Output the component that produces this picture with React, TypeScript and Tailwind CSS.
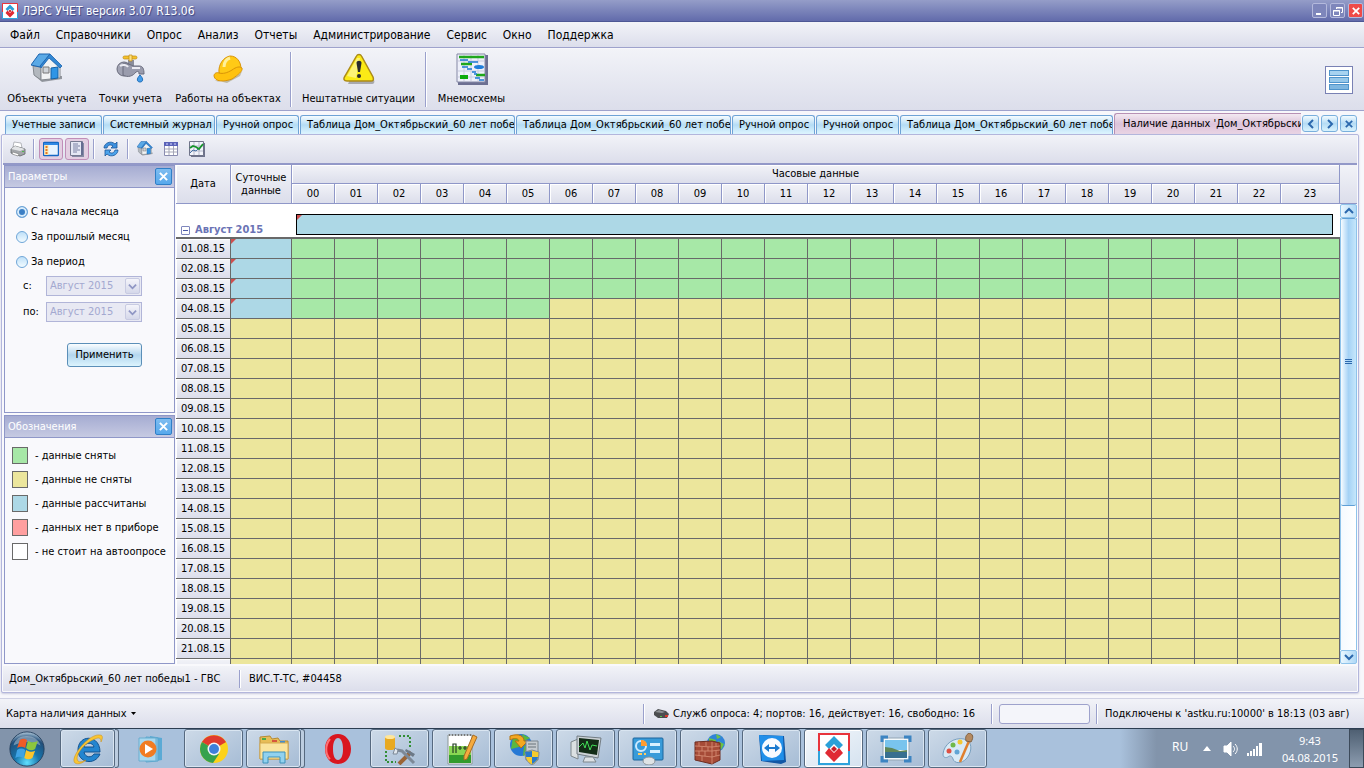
import React from "react";

const HOURS = Array.from({ length: 24 }, (_, i) => String(i).padStart(2, "0"));
const DAYS = Array.from({ length: 21 }, (_, i) => `${String(i + 1).padStart(2, "0")}.08.15`);
const MENU = ["Файл", "Справочники", "Опрос", "Анализ", "Отчеты", "Администрирование", "Сервис", "Окно", "Поддержка"];

const TABS = [
  { label: "Учетные записи", width: "w-[97px]" },
  { label: "Системный журнал", width: "w-[112px]" },
  { label: "Ручной опрос", width: "w-[83px]" },
  { label: "Таблица Дом_Октябрьский_60 лет побе", width: "w-[215px]" },
  { label: "Таблица Дом_Октябрьский_60 лет побе", width: "w-[215px]" },
  { label: "Ручной опрос", width: "w-[83px]" },
  { label: "Ручной опрос", width: "w-[83px]" },
  { label: "Таблица Дом_Октябрьский_60 лет побе", width: "w-[213px]" },
];

const LEGEND = [
  { color: "bg-[#a7e8a7]", label: "- данные сняты" },
  { color: "bg-[#ece69c]", label: "- данные не сняты" },
  { color: "bg-[#add8e6]", label: "- данные рассчитаны" },
  { color: "bg-[#ff9f9f]", label: "- данных нет в приборе" },
  { color: "bg-white", label: "- не стоит на автоопросе" },
];

/* ─── Icons ─── */

function LersLogo({ className }: { className: string }) {
  return (
    <svg viewBox="0 0 32 32" className={className}>
      <path d="M0 0h32v32H0z" fill="#fff" />
      <path d="M1 31V1h30" fill="none" stroke="#e8343c" strokeWidth="2" />
      <path d="M31 1v30H1" fill="none" stroke="#2ea3dc" strokeWidth="2" />
      <path d="M1 18V1h30v17" fill="none" stroke="#e8343c" strokeWidth="2" />
      <path d="M1 18v13h30V18" fill="none" stroke="#2ea3dc" strokeWidth="2" />
      <path d="M16 3l9 9-4 4-5-5-5 5-4-4z" fill="#2ba0d8" />
      <path d="M16 29l-9-9 4-5 5 5 5-5 4 5z" fill="#e02a33" />
      <path d="M16 13l3 3-3 3-3-3z" fill="#c8202a" />
    </svg>
  );
}

function HouseIcon({ className }: { className: string }) {
  return (
    <svg viewBox="0 0 32 32" className={className}>
      <path d="M4 23l7 6 20-3v-3z" fill="#5c6167" opacity=".6" />
      <path d="M2 13l8 1v13l-7-5z" fill="#b3b8be" stroke="#858a90" />
      <path d="M10 14l8-10 11 10v11l-19 2z" fill="#f1f3f4" stroke="#858a90" />
      <path d="M0 12L8 1h11L9 14z" fill="#5aa9e6" stroke="#1b62ad" />
      <path d="M19 1l12 12-2 2L18 5l-8 10-1-2z" fill="#3287d3" stroke="#1b62ad" strokeWidth=".8" />
      <path d="M20 15l7-1v11l-7 1z" fill="#2f95e6" stroke="#1661a4" />
      <path d="M12 14h6v6h-6z" fill="#cfd4d9" stroke="#777" />
    </svg>
  );
}

function TapIcon() {
  return (
    <svg viewBox="0 0 32 32" className="size-8">
      <path d="M13 7h6v7h-6z" fill="#8a8d9c" />
      <circle cx="9" cy="16" r="7" fill="#a1a3b3" stroke="#696b7c" />
      <path d="M8 11c5-1 8 1 10 2h6c4 0 5 3 5 8h-5c0-3-1-3-3-2-3 4-8 6-13 3z" fill="#9a9cad" stroke="#696b7c" />
      <path d="M5 13c3-2 7-1 8 1M17 15h8" fill="none" stroke="#ececf3" strokeWidth="2" />
      <rect x="8" y="3" width="14" height="3" rx="1.500" fill="#f4c22c" stroke="#bf8a14" strokeWidth=".7" />
      <path d="M14 2h3v6h-3z" fill="#ffe280" stroke="#bf8a14" strokeWidth=".7" />
      <path d="M25 22c4 4 3 7 0 7s-4-3 0-7z" fill="#439deb" stroke="#2470b9" />
    </svg>
  );
}

function HelmetIcon() {
  return (
    <svg viewBox="0 0 32 32" className="size-8">
      <path d="M3 27c4 5 26-3 28-11l-3 7-13 7z" fill="#827331" opacity=".4" />
      <path d="M7 20C6 11 12 4 18 3c7 0 11 6 11 13L16 23z" fill="#ffca16" stroke="#d99408" />
      <path d="M2 23c0-3 3-4 5-3 4 1 8 0 13-3 4-3 8-4 10-2 1 3-4 7-10 11-8 3-17 3-18-3z" fill="#ffc20e" stroke="#d99408" />
      <path d="M12 14c0-5 3-8 6-9" fill="none" stroke="#fff09b" strokeWidth="3" />
    </svg>
  );
}

function WarningIcon() {
  return (
    <svg viewBox="0 0 32 32" className="size-8">
      <path d="M17 3l14 24c1 2 0 4-2 4H5z" fill="#6c6c6c" opacity=".5" />
      <path d="M13.500 3c1-2 4-2 5 0L30 24c1 3 0 4-2 4H4c-3 0-4-2-2-5z" fill="#fbea16" stroke="#ad8b17" strokeWidth="1.500" />
      <path d="M14 5L4 23l9 2 4-20z" fill="#fdf5a1" opacity=".7" />
      <path d="M13.500 10c0-3 5-3 5 0l-1.500 9h-2z" fill="#29292e" />
      <circle cx="16" cy="23" r="2" fill="#29292e" />
    </svg>
  );
}

function SchemeIcon() {
  return (
    <svg viewBox="0 0 32 32" className="size-8">
      <path d="M2 2h30v30H2z" fill="#6d7092" />
      <path d="M1 1h28v28H1z" fill="#eef0fa" stroke="#8588a5" />
      <path d="M8 2v26M15 2v26M22 2v26M2 8h26M2 18h26M2 24h26" stroke="#c9cce0" />
      <path d="M3 4h25M5 11h11M20 22h9" stroke="#1fa71c" strokeWidth="2.500" />
      <path d="M4 22h8v4H4z" fill="#0daa0d" />
      <path d="M4 7h8M12 9h10M6 14h6M11 16h5M16 19h4M18 21h3M19 25h5M23 27h5" fill="none" stroke="#1c78d2" strokeWidth="1.500" />
      <ellipse cx="23" cy="14" rx="5" ry="2" fill="#1e7dda" />
    </svg>
  );
}

function PrinterIcon() {
  return (
    <svg viewBox="0 0 16 16" className="size-4">
      <path d="M3 6l1-5 7 1 1 5z" fill="#fff" stroke="#9a9ca2" strokeWidth=".7" />
      <path d="M1 8l4-3 10 3v5l-5 2-9-3z" fill="#a2a5a9" stroke="#5e6265" strokeWidth=".8" />
      <path d="M1 8l4-3 10 3-5 2z" fill="#e3e5e7" />
      <path d="M3 11l6 2-1 2-6-2z" fill="#fff" stroke="#777" strokeWidth=".6" />
      <path d="M12 10h2v1h-2z" fill="#51b84e" />
    </svg>
  );
}

function PanelIcon() {
  return (
    <svg viewBox="0 0 16 16" className="size-4">
      <rect x=".5" y="1.500" width="15" height="13" rx="1" fill="#e8f3ff" stroke="#1567c4" strokeWidth="1.500" />
      <path d="M1 2h14v2H1z" fill="#3188e5" />
      <path d="M1.500 4h4v10h-4z" fill="#ffe8a6" />
      <path d="M2.500 5h2v2h-2zM2.500 8h2v2h-2zM2.500 11h2v2h-2z" fill="#e7772a" />
    </svg>
  );
}

function DocumentIcon() {
  return (
    <svg viewBox="0 0 16 16" className="size-4">
      <path d="M3 2h12v14H3z" fill="#858aa5" />
      <path d="M1.500.500h12v14h-12z" fill="#e4e7f4" stroke="#767a91" />
      <path d="M4 3h5M4 5h7M4 7h5M4 9h7M4 11h4" stroke="#7b81a4" />
      <path d="M12 1h2v13h-2z" fill="#666d91" />
    </svg>
  );
}

function RefreshIcon() {
  return (
    <svg viewBox="0 0 16 16" className="size-4">
      <path d="M1 7c0-5 7-8 11-4l2-2v6H8l2-2C7 3 5 4 4 7z" fill="#3d91df" stroke="#1b5799" strokeWidth=".8" />
      <path d="M15 9c0 5-7 8-11 4l-2 2V9h6l-2 2c3 2 5 1 6-2z" fill="#4ca4ec" stroke="#1b5799" strokeWidth=".8" />
    </svg>
  );
}

function TableIcon() {
  return (
    <svg viewBox="0 0 16 16" className="size-4">
      <path d="M1.500 1.500h13v13h-13z" fill="#fff" stroke="#8a8cb0" />
      <path d="M1 1h14v4H1z" fill="#5a62b8" />
      <path d="M3 3h2M7 3h2M11 3h2" stroke="#d6daff" />
      <path d="M6 5v9M10.500 5v9M2 8h12M2 11h12" stroke="#a5a6b7" />
    </svg>
  );
}

function ChartIcon() {
  return (
    <svg viewBox="0 0 16 16" className="size-4">
      <path d="M2 2h14v14H2z" fill="#6e738c" />
      <path d="M.500.500h14v14H.500z" fill="#f2f4fb" stroke="#70748a" />
      <path d="M5 1v13M10 1v13M1 5h13M1 10h13" stroke="#b6bacd" />
      <path d="M1 7l3-2 3 1 3 2 4-5" fill="none" stroke="#15942a" strokeWidth="1.800" />
      <path d="M1 12l3-3 3 1 2-2" fill="none" stroke="#4772a4" />
    </svg>
  );
}

function CloseGlyph({ className }: { className: string }) {
  return (
    <svg viewBox="0 0 10 10" className={className} fill="none" stroke="currentColor" strokeWidth="2.200">
      <path d="M1 1l8 8M9 1L1 9" />
    </svg>
  );
}

function Chevron({ d }: { d: string }) {
  return (
    <svg viewBox="0 0 10 10" className="size-[10px]" fill="none" stroke="#2b68ad" strokeWidth="2">
      <path d={d} />
    </svg>
  );
}

/* ─── Taskbar icons, 32px ─── */

const StartOrb = () => (
  <svg viewBox="0 0 40 40" className="size-9">
    <defs>
      <radialGradient id="orb" cx=".5" cy=".9" r=".9">
        <stop offset="0" stopColor="#5fe0ff" />
        <stop offset=".4" stopColor="#1775ac" />
        <stop offset=".8" stopColor="#224f7a" />
        <stop offset="1" stopColor="#b8cfe0" />
      </radialGradient>
    </defs>
    <circle cx="20" cy="20" r="19" fill="url(#orb)" stroke="#223d5b" />
    <path d="M5 16C8 2 31 2 35 16c-9-5-20-5-30 0z" fill="#fff" opacity=".35" />
    <path d="M12 10c3-2 5-2 8 0l-2 9c-3-2-6-2-9 0z" fill="#ee5b27" />
    <path d="M21 11c4 2 7 2 11 0l-3 9c-3 2-7 2-10-1z" fill="#8cc63e" />
    <path d="M9 21c3-2 6-2 9 0l-2 9c-3-2-6-2-9 0z" fill="#3fa3e5" />
    <path d="M19 21c3 2 6 3 10 1l-3 8c-3 2-6 2-9 0z" fill="#fcc52c" />
  </svg>
);

const ExplorerE = () => (
  <svg viewBox="0 0 32 32" className="size-8">
    <path d="M28 19H12c1 6 8 6 10 2h6c-5 12-22 9-22-4C6 1 28 1 28 19zM12 14h10c-1-5-9-5-10 0z" fill="#2385cf" stroke="#125390" />
    <path d="M3 30C-3 25 17 0 28 2c4 0 2 5 1 7 0-4-2-5-6-3C12 10 2 23 6 28c2 2 6 0 8-1-3 3-8 5-11 3z" fill="#f9c534" stroke="#c98d14" strokeWidth=".5" />
  </svg>
);

const MediaIcon = () => (
  <svg viewBox="0 0 32 32" className="size-8">
    <path d="M14 3l12 2v22l-12 2z" fill="#5aaad5" />
    <path d="M10 4l12 1v23l-12 1z" fill="#8cc7e6" stroke="#5ba5cc" />
    <path d="M3 5h17v23H3z" fill="#a8d8ef" stroke="#68adcf" />
    <circle cx="12" cy="16" r="8.500" fill="#f17c22" />
    <path d="M9 11l8 5-8 5z" fill="#fff" />
  </svg>
);

const ChromeIcon = () => (
  <svg viewBox="0 0 32 32" className="size-8">
    <circle cx="16" cy="16" r="14" fill="#fcd21b" />
    <path d="M16 16L3.900 9A14 14 0 0 1 28 9H16z" fill="#e03a2e" />
    <path d="M16 16L3.900 9A14 14 0 0 0 15 30l6-9z" fill="#36a24d" />
    <path d="M16 9h12.100L16 16z" fill="#e03a2e" />
    <circle cx="16" cy="16" r="6.500" fill="#f4f5f6" />
    <circle cx="16" cy="16" r="5" fill="#3f7fdb" />
  </svg>
);

const FolderIcon = () => (
  <svg viewBox="0 0 32 32" className="size-8">
    <path d="M2 7V4l10-1 2 3 6-1 2 3h8v18H2z" fill="#e7bd57" stroke="#b78a31" />
    <path d="M4 5h4v2H4z" fill="#4bab48" />
    <path d="M14 7h5v2h-5z" fill="#d8573c" />
    <path d="M22 8h5v3h-5z" fill="#418dcc" />
    <path d="M2 10h28v16H2z" fill="#fae49d" stroke="#d5aa50" />
    <path d="M5 30V19h22v11h-5v-6H10v6z" fill="#91d2ef" stroke="#3c91ba" />
  </svg>
);

const OperaIcon = () => (
  <svg viewBox="0 0 32 32" className="size-8">
    <path d="M16 1C9 1 3 7 3 16s6 15 13 15 13-6 13-15S23 1 16 1zm0 4c3 0 5 4 5 11s-2 11-5 11-5-4-5-11 2-11 5-11z" fill="#d9161f" />
    <path d="M8 6c-5 6-5 15 0 20" fill="none" stroke="#ff7172" strokeWidth="2" />
  </svg>
);

const ToolsIcon = () => (
  <svg viewBox="0 0 32 32" className="size-8">
    <path d="M15 3h11v11M2 18v11h10" fill="none" stroke="#328e35" strokeWidth="2" strokeDasharray="2 2" />
    <path d="M1 4h10v11H1z" fill="#e8a921" />
    <ellipse cx="6" cy="4" rx="5" ry="2" fill="#ffe699" />
    <ellipse cx="6" cy="15" rx="5" ry="2" fill="#e8a921" />
    <path d="M27 19L15 31" stroke="#9b6436" strokeWidth="4" />
    <path d="M13 17l5 1 12 12" fill="none" stroke="#7d8997" strokeWidth="3" />
    <path d="M22 16l9 5-2 3-8-6z" fill="#6c7987" />
    <path d="M11 15l3 2-1 4h-4z" fill="#e2e8ee" stroke="#7d8997" />
  </svg>
);

const NotepadIcon = () => (
  <svg viewBox="0 0 32 32" className="size-8">
    <path d="M2 2h24v29H2z" fill="#fff" stroke="#8c9697" />
    <path d="M3 13h22v17H3z" fill="#8ad653" />
    <path d="M3 22h22v8H3z" fill="#329b2d" />
    <path d="M3 2h22" stroke="#777" strokeWidth="2" strokeDasharray="1 2" />
    <path d="M7 20v-9h3v9M12 15h4M14 13v4M17 15h4M19 13v4" fill="none" stroke="#263f27" strokeWidth="1.200" />
    <path d="M27 2l4 2-10 22-3 1v-4z" fill="#f5aa3d" stroke="#a56b24" />
  </svg>
);

const GlobeServerIcon = () => (
  <svg viewBox="0 0 32 32" className="size-8">
    <circle cx="13" cy="12" r="11" fill="#2779d5" />
    <path d="M5 4l9 3-3 7-8 2zM16 13l7-3-1 9-7 4zM14 1l8 4-6 3z" fill="#5bb840" />
    <path d="M2 3c9-3 14 0 14 5h4l-7 7-6-7h4C10 5 6 5 2 7z" fill="#f3a821" stroke="#b6720d" />
    <path d="M18 8h12v19H18z" fill="#c5cbd0" stroke="#7a858d" />
    <path d="M20 11h8M20 14h8" stroke="#68737b" />
    <path d="M24 17l7 2c0 7-2 10-7 13-5-3-7-6-7-13z" fill="#f6cb2e" stroke="#7d899b" />
    <path d="M24 18v6h-6l-1-5zM24 24h6c-1 4-3 5-6 7z" fill="#2979cc" />
  </svg>
);

const MonitorIcon = () => (
  <svg viewBox="0 0 32 32" className="size-8">
    <path d="M1 9l7-3v20l-7-3z" fill="#dbe0e2" stroke="#7e878c" />
    <path d="M7 3l24 2-3 20-21-4z" fill="#ccd2d6" stroke="#737d84" />
    <path d="M9 5l20 2-2 15-18-3z" fill="#132c17" />
    <path d="M9 14l4-4 2 5 2-7 3 9 2-5 5 1" fill="none" stroke="#40dc55" />
    <path d="M15 24h8l3 5H13z" fill="#dce1e5" stroke="#7e878c" />
  </svg>
);

const ControlPanelIcon = () => (
  <svg viewBox="0 0 32 32" className="size-8">
    <rect x="1" y="5" width="30" height="22" rx="1" fill="#389bd9" stroke="#1c659c" />
    <circle cx="9" cy="13" r="5" fill="none" stroke="#cceaff" strokeWidth="2" />
    <path d="M9 13V7c4 0 6 2 6 6z" fill="#ff9c30" />
    <path d="M18 10h10v3H18zM18 17h10v3H18z" fill="#d6f0ff" />
    <path d="M6 21h4M12 21h2" stroke="#ffcc63" strokeWidth="2" />
    <ellipse cx="17" cy="28" rx="6" ry="4" fill="#dfe3e5" stroke="#8a9297" />
  </svg>
);

const FirewallIcon = () => (
  <svg viewBox="0 0 32 32" className="size-8">
    <circle cx="22" cy="10" r="9" fill="#3084d8" />
    <path d="M15 5l7 2-2 6-5 1zM24 8l6 3-3 6zM22 1l5 3-4 2z" fill="#6cc344" />
    <path d="M1 9l17-1 8 2v17l-8 4-17-4z" fill="#a64b37" stroke="#6c2c20" />
    <path d="M1 13l17 1 8-1M1 18h17l8-1M1 22l17 2 8-2M18 9v22M5 9v4M12 9v4M8 14v4M14 14v4M5 18v5M11 18v5M8 23v5M22 10v3M22 18v5" fill="none" stroke="#d99278" strokeWidth=".8" />
  </svg>
);

const TeamViewerIcon = () => (
  <svg viewBox="0 0 32 32" className="size-8">
    <path d="M3 2l25 1 2 26-5 2-20-3z" fill="#1257a5" />
    <path d="M3 2l24 1 1 24-22 1z" fill="#218fe9" />
    <circle cx="16" cy="15" r="10" fill="#f7faff" />
    <path d="M8 15l5-4v3h6v-3l5 4-5 4v-3h-6v3z" fill="#1878cf" />
  </svg>
);

const PictureIcon = () => (
  <svg viewBox="0 0 32 32" className="size-8">
    <path d="M3 5h26v22H3z" fill="#f3f9fc" stroke="#93a5b4" />
    <path d="M5 7h22v10H5z" fill="#79c4ed" />
    <path d="M5 14l7 1 8 3 7-1v3H5z" fill="#5f8658" />
    <path d="M5 19h22v6H5z" fill="#376f90" />
    <path d="M2 9V4h6M24 4h6v5M30 23v5h-6M8 28H2v-5" fill="none" stroke="#3c84c2" strokeWidth="3" />
  </svg>
);

const PaletteIcon = () => (
  <svg viewBox="0 0 32 32" className="size-8">
    <path d="M1 21C2 11 12 4 22 6c8 2 9 11 3 19-6 7-13 5-14 1-1-3-3-4-5-2-2 1-5 1-5-3z" fill="#d9eaf6" stroke="#79a0bf" />
    <circle cx="7" cy="18" r="2.500" fill="#df5144" />
    <circle cx="11" cy="12" r="2.500" fill="#70b948" />
    <circle cx="18" cy="9" r="2.500" fill="#f4c832" />
    <circle cx="15" cy="19" r="2.500" fill="#61a5d5" />
    <path d="M18 29l9-21" stroke="#df7f2d" strokeWidth="2.500" />
    <path d="M24 8c-1-4 0-6 3-8 4 1 5 4 2 9z" fill="#b58a60" stroke="#7f6042" />
  </svg>
);

const TASKS = [
  { name: "Internet Explorer", icon: <ExplorerE />, kind: "stack" },
  { name: "Windows Media Player", icon: <MediaIcon />, kind: "pinned" },
  { name: "Chrome", icon: <ChromeIcon />, kind: "open" },
  { name: "Проводник", icon: <FolderIcon />, kind: "stack" },
  { name: "Opera", icon: <OperaIcon />, kind: "pinned" },
  { name: "Администрирование", icon: <ToolsIcon />, kind: "open" },
  { name: "Notepad++", icon: <NotepadIcon />, kind: "open" },
  { name: "Сеть", icon: <GlobeServerIcon />, kind: "open" },
  { name: "Монитор", icon: <MonitorIcon />, kind: "open" },
  { name: "Панель управления", icon: <ControlPanelIcon />, kind: "open" },
  { name: "Брандмауэр", icon: <FirewallIcon />, kind: "open" },
  { name: "TeamViewer", icon: <TeamViewerIcon />, kind: "open" },
  { name: "ЛЭРС УЧЕТ", icon: <LersLogo className="size-8" />, kind: "active" },
  { name: "Просмотр", icon: <PictureIcon />, kind: "open" },
  { name: "Paint", icon: <PaletteIcon />, kind: "open" },
];

const TASK_STYLE: Record<string, string> = {
  pinned: "border-transparent",
  open: "border-[#56697f] bg-linear-to-br from-[#cddae8] to-[#a6bcd5] shadow-[inset_0_0_0_1px_#d9e5f1]",
  stack: "border-[#56697f] bg-linear-to-br from-[#cddae8] to-[#a6bcd5] shadow-[inset_0_0_0_1px_#d9e5f1]",
  active: "border-[#56697f] bg-linear-to-br from-[#f4f8fc] to-[#d5e2ef] shadow-[inset_0_0_0_1px_#ffffff]",
};

/* ─── Pieces ─── */

function Separator({ className }: { className: string }) {
  return <div className={`w-[2px] shrink-0 border-l border-[#9aa0cc] bg-white ${className}`} />;
}

interface ToolButtonProps {
  label: string;
  width: string;
  children: React.ReactNode;
}

function ToolButton({ label, width, children }: ToolButtonProps) {
  return (
    <button className={`flex shrink-0 flex-col items-center gap-[7px] whitespace-nowrap pt-1 ${width}`}>
      {children}
      <span className="leading-[14px]">{label}</span>
    </button>
  );
}

function SidePanel({ title, className, children }: { title: string; className: string; children: React.ReactNode }) {
  return (
    <section className={`flex flex-col border border-[#8f97c8] bg-[#f9f9fc] ${className}`}>
      <header className="flex h-[22px] shrink-0 items-center justify-between border-b border-[#8f97c8] bg-linear-to-b from-[#a6acd2] to-[#c6cae2] pl-[3px] pr-[2px] text-white">
        <h2>{title}</h2>
        <button aria-label="Закрыть" className="flex size-[17px] items-center justify-center rounded-[2px] border border-[#2f7fc7] bg-linear-to-b from-[#7dbcf0] to-[#57a9ec]">
          <CloseGlyph className="size-[9px]" />
        </button>
      </header>
      {children}
    </section>
  );
}

function PeriodRadio({ label, checked }: { label: string; checked?: boolean }) {
  return (
    <label className="flex h-[25px] items-center gap-[3px]">
      <input
        type="radio"
        name="period"
        defaultChecked={checked}
        className="size-3 appearance-none rounded-full border border-[#6fa6d8] bg-linear-to-b from-[#bfe0f8] to-[#f2fbff] checked:bg-[#3c7fc4] checked:bg-none checked:shadow-[inset_0_0_0_2px_#d8ecfb]"
      />
      {label}
    </label>
  );
}

function MonthSelect({ id, label }: { id: string; label: string }) {
  return (
    <div className="flex items-center">
      <label htmlFor={id} className="w-[23px]">{label}</label>
      <div className="flex h-5 w-24 items-center border border-[#b1b5d8] bg-[#e8e9f3] pl-[3px] pr-[1px]">
        <select id={id} disabled className="min-w-0 flex-1 appearance-none text-[#a3a8d0] opacity-100">
          <option>Август 2015</option>
        </select>
        <span className="flex h-4 w-[15px] items-center justify-center rounded-[2px] border border-[#c8cbe2] bg-linear-to-b from-[#f4f4fa] to-[#d5d8ea]">
          <svg viewBox="0 0 10 10" className="size-[9px]" fill="none" stroke="#8f96c4" strokeWidth="2">
            <path d="M1 3l4 4 4-4" />
          </svg>
        </span>
      </div>
    </div>
  );
}

function NavButton({ label, children }: { label: string; children: React.ReactNode }) {
  return (
    <button aria-label={label} className="flex size-[17px] items-center justify-center rounded-[3px] border border-[#7ab0dd] bg-linear-to-b from-[#f2fbff] via-[#b5dcf5] to-[#d8f2fd] text-[#2b68ad]">
      {children}
    </button>
  );
}

const HEAD = "border-b border-r border-[#8f97c8] bg-linear-to-b from-[#f2f3f8] to-[#dcdeeb] p-0 font-normal shadow-[inset_1px_1px_0_#ffffff]";
const CELL = "border-b border-r border-[#696969] p-0";

function cellColor(day: number, hour: number) {
  return day < 3 || (day === 3 && hour < 6) ? "bg-[#a7e8a7]" : "bg-[#ece69c]";
}

function CornerMark() {
  return (
    <svg viewBox="0 0 5 5" className="block size-[5px]">
      <path d="M0 0h5L0 5z" fill="#cf4f4f" />
    </svg>
  );
}

function DayRow({ date, day }: { date: string; day: number }) {
  return (
    <tr className="h-5">
      <th className={`${CELL} bg-linear-to-b from-[#f2f3f8] to-[#dcdeeb] font-normal shadow-[inset_1px_1px_0_#ffffff]`}>{date}</th>
      <td className={`${CELL} align-top ${day < 4 ? "bg-[#add8e6]" : "bg-[#ece69c]"}`}>
        {day < 4 && <CornerMark />}
      </td>
      {HOURS.map((h, hour) => (
        <td key={h} className={`${CELL} ${cellColor(day, hour)}`} />
      ))}
    </tr>
  );
}

function DataTable() {
  return (
    <div className="h-full min-w-0 flex-1 overflow-hidden bg-white">
      <table className="w-full table-fixed border-separate border-spacing-0">
        <colgroup>
          <col className="w-[55px]" />
          <col className="w-[61px]" />
          {HOURS.map((h) => (
            <col key={h} className={h === "23" ? "" : "w-[43px]"} />
          ))}
        </colgroup>
        <thead>
          <tr className="h-[19px]">
            <th rowSpan={2} className={HEAD}>Дата</th>
            <th rowSpan={2} className={`${HEAD} leading-[13px]`}>Суточные данные</th>
            <th colSpan={24} className={`${HEAD} leading-[14px]`}>Часовые данные</th>
          </tr>
          <tr className="h-5">
            {HOURS.map((h) => (
              <th key={h} className={HEAD}>{h}</th>
            ))}
          </tr>
        </thead>
        <tbody>
          <tr className="h-[35px]">
            <td colSpan={26} className="border-b-2 border-[#696969] p-0">
              <div className="flex h-[33px] items-end">
                <div className="flex w-[120px] items-center gap-[5px] pl-[5px] font-bold text-[#6b74b5]">
                  <button aria-label="Свернуть" className="flex size-[9px] items-center justify-center rounded-[1px] border border-[#7f87bd] bg-white">
                    <span className="h-px w-[5px] bg-[#4c5aa5]" />
                  </button>
                  Август 2015
                </div>
                <div className="mb-[2px] mr-[7px] h-[21px] flex-1 border border-black bg-[#add8e6]">
                  <CornerMark />
                </div>
              </div>
            </td>
          </tr>
          {DAYS.map((date, day) => (
            <DayRow key={date} date={date} day={day} />
          ))}
          <DayRow date="" day={DAYS.length} />
        </tbody>
      </table>
    </div>
  );
}

function ScrollColumn() {
  return (
    <div className="flex w-[17px] shrink-0 flex-col">
      <div className="h-[39px] shrink-0 border-b border-[#8f97c8] bg-linear-to-b from-[#f2f3f8] to-[#dcdeeb]" />
      <button aria-label="Вверх" className="flex h-[14px] shrink-0 items-center justify-center rounded-[2px] border border-[#8fc3ea] bg-linear-to-r from-[#eaf7ff] to-[#aed8f6]">
        <Chevron d="M1 7l4-4 4 4" />
      </button>
      <div className="min-h-0 flex-1 border-x border-[#8fc3ea] bg-linear-to-r from-[#f5fafe] to-white">
        <div className="flex h-2/3 items-center justify-center rounded-[2px] border-y border-[#5f9fd6] bg-linear-to-r from-[#f7fcff] via-[#a5d2f5] to-[#c6e7fb]">
          <span className="flex h-[5px] w-[7px] items-center border-y border-[#2b68ad]">
            <span className="h-px w-full bg-[#2b68ad]" />
          </span>
        </div>
      </div>
      <button aria-label="Вниз" className="flex h-[14px] shrink-0 items-center justify-center rounded-[2px] border border-[#8fc3ea] bg-linear-to-r from-[#eaf7ff] to-[#aed8f6]">
        <Chevron d="M1 3l4 4 4-4" />
      </button>
    </div>
  );
}

function TitleBar() {
  const box = "flex size-[15px] items-center justify-center rounded-[2px] border border-[#b4b9dc]";
  return (
    <header className="flex h-[22px] shrink-0 items-center gap-1 border-b border-[#4d5794] bg-linear-to-b from-[#959dc8] to-[#626bab] pl-[2px] pr-[1px] text-white">
      <LersLogo className="size-4" />
      <h1 className="flex-1 text-[12px] [text-shadow:1px_1px_1px_#3b4480]">ЛЭРС УЧЕТ версия 3.07 R13.06</h1>
      <div className="flex gap-[3px]">
        <button aria-label="Свернуть" className={`${box} bg-[#7e86bb]`}>
          <svg viewBox="0 0 10 10" className="size-[10px]"><path d="M1 7h5v2H1z" fill="#fff" /></svg>
        </button>
        <button aria-label="Восстановить" className={`${box} bg-[#7e86bb]`}>
          <svg viewBox="0 0 10 10" className="size-[10px]" fill="none" stroke="#fff">
            <path d="M.500 4.500h6v5h-6zM0 5h7M3.500 3V1.500h6v5H8M3 2h7" />
          </svg>
        </button>
        <button aria-label="Закрыть" className={`${box} bg-[#ef4a48]`}>
          <CloseGlyph className="size-[8px]" />
        </button>
      </div>
    </header>
  );
}

function Taskbar() {
  return (
    <footer className="flex h-10 shrink-0 items-stretch border-t border-[#2c3d52] bg-[#a9c1dc]">
      <button aria-label="Пуск" className="flex w-[60px] items-center bg-[#8294ab] pl-[9px]">
        <StartOrb />
      </button>
      <div className="flex gap-[3px]">
        {TASKS.map((task) => (
          <div key={task.name} className="flex w-[59px]">
            <button aria-label={task.name} className={`flex min-w-0 flex-1 items-center justify-center rounded-[3px] border ${TASK_STYLE[task.kind]}`}>
              {task.icon}
            </button>
            {task.kind === "stack" && <span className="w-1 rounded-r-[3px] border-y border-r border-[#56697f] bg-[#bccde0]" />}
          </div>
        ))}
      </div>
      <div className="ml-auto flex items-center bg-linear-to-r from-[#a9c1dc] to-[#8294ab] to-15% pl-[48px] font-['Noto_Sans',sans-serif] text-[12px] text-white">
        <span className="w-[35px] pb-1 pl-1">RU</span>
        <svg viewBox="0 0 8 5" className="mr-3 h-[5px] w-2"><path d="M4 0l4 5H0z" fill="#fff" /></svg>
        <svg viewBox="0 0 16 16" className="mr-2 size-4" fill="none" stroke="#fff">
          <path d="M1 5h3l4-4v14l-4-4H1z" fill="#fff" />
          <path d="M10 5c2 2 2 4 0 6M12 3c3 3 3 7 0 10" />
        </svg>
        <svg viewBox="0 0 16 14" className="mr-[17px] h-[14px] w-4" fill="#fff">
          <path d="M0 11h2v3H0zM3 9h2v5H3zM6 7h2v7H6zM9 4h2v10H9zM12 1h3v13h-3z" />
        </svg>
        <div className="w-[60px] whitespace-nowrap text-center text-[11px] leading-[17px]">
          <div>9:43</div>
          <div>04.08.2015</div>
        </div>
        <button aria-label="Показать рабочий стол" className="ml-[9px] h-full w-[15px] border border-[#3c4a5a] bg-linear-to-b from-[#4f6073] to-[#8d9db0]" />
      </div>
    </footer>
  );
}

/* ─── Page ─── */

export default function App() {
  return (
    <div className="flex h-screen flex-col overflow-hidden bg-[#f7f7fb] font-['DejaVu_Sans_Condensed','Noto_Sans',sans-serif] text-[11px] leading-[14px] text-black">
      <TitleBar />

      <nav className="flex h-[26px] shrink-0 items-center gap-4 border-b border-[#9ea2cc] bg-linear-to-b from-[#f2f3f8] to-[#dcdeeb] pl-[10px] text-[12px]">
        {MENU.map((item) => (
          <a key={item} href="#">{item}</a>
        ))}
      </nav>

      <div className="mt-px flex h-[62px] shrink-0 items-stretch border-b border-[#9ea2cc] bg-linear-to-b from-[#f2f3f8] to-[#dcdeeb] pl-[1px]">
        <ToolButton label="Объекты учета" width="w-[92px]"><HouseIcon className="size-8" /></ToolButton>
        <ToolButton label="Точки учета" width="w-[75px]"><TapIcon /></ToolButton>
        <ToolButton label="Работы на объектах" width="w-[120px]"><HelmetIcon /></ToolButton>
        <Separator className="my-[3px] mx-[2px]" />
        <ToolButton label="Нештатные ситуации" width="w-[129px]"><WarningIcon /></ToolButton>
        <Separator className="my-[3px] mx-[2px]" />
        <ToolButton label="Мнемосхемы" width="w-[85px]"><SchemeIcon /></ToolButton>
        <button aria-label="Вид" className="ml-auto mr-[11px] flex size-7 flex-col justify-center gap-px self-center border border-[#7981b4] bg-white px-[3px]">
          <span className="h-[6px] w-full border border-[#4f94cb] bg-[#a7d3f0]" />
          <span className="h-[6px] w-full border border-[#4f94cb] bg-[#96c8ea]" />
          <span className="h-[6px] w-full border border-[#4f94cb] bg-[#7fb7e0]" />
        </button>
      </div>

      <div className="flex h-[23px] shrink-0 items-end pl-[5px] pr-[7px]">
        <div role="tablist" className="flex min-w-0 flex-1 items-end gap-px overflow-hidden">
          {TABS.map((tab, i) => (
            <button
              key={i}
              role="tab"
              className={`h-[19px] shrink-0 overflow-hidden whitespace-nowrap rounded-t-[3px] border border-b-0 border-[#6ea3d6] bg-linear-to-b from-[#f6fcff] via-[#b4dcf5] to-[#dff6ff] pl-[6px] text-left ${tab.width}`}
            >
              {tab.label}
            </button>
          ))}
          <button role="tab" aria-selected="true" className="h-[21px] min-w-0 flex-1 overflow-hidden whitespace-nowrap rounded-tl-[3px] border-l border-t border-[#b790b4] bg-linear-to-b from-[#f3e9f1] via-[#dcc3da] to-[#ead4e4] pl-2 text-left">
            Наличие данных 'Дом_Октябрьский
          </button>
        </div>
        <div className="flex gap-[2px] self-start pl-[1px] pt-1">
          <NavButton label="Назад"><Chevron d="M7 1L3 5l4 4" /></NavButton>
          <NavButton label="Вперед"><Chevron d="M3 1l4 4-4 4" /></NavButton>
          <NavButton label="Закрыть вкладку"><CloseGlyph className="size-[8px]" /></NavButton>
        </div>
      </div>

      <main className="ml-[1px] mr-[5px] flex min-h-0 flex-1 flex-col rounded-[2px] border border-[#b3b6dc] bg-[#f9f9fc] px-[1px] pb-[1px] shadow-[0_1px_2px_#c9cbdd]">
        <div className="flex h-[30px] shrink-0 items-center border-b-2 border-[#9298c8] bg-linear-to-b from-[#f2f3f8] to-[#dcdeeb] pl-[7px]">
          <button aria-label="Печать"><PrinterIcon /></button>
          <Separator className="ml-[7px] mr-1 h-5" />
          <button aria-label="Параметры" className="flex h-[22px] w-6 items-center justify-center rounded-[3px] border border-[#c08eb8] bg-[#e3cfe2]"><PanelIcon /></button>
          <button aria-label="Обозначения" className="ml-[2px] flex h-[22px] w-6 items-center justify-center rounded-[3px] border border-[#c08eb8] bg-[#e3cfe2]"><DocumentIcon /></button>
          <Separator className="ml-[4px] mr-2 h-5" />
          <button aria-label="Обновить"><RefreshIcon /></button>
          <Separator className="mx-2 h-5" />
          <div className="flex gap-[10px]">
            <button aria-label="Дом"><HouseIcon className="size-4" /></button>
            <button aria-label="Таблица"><TableIcon /></button>
            <button aria-label="График"><ChartIcon /></button>
          </div>
        </div>

        <div className="flex min-h-0 flex-1 pl-[1px]">
          <aside className="flex w-[171px] shrink-0 flex-col gap-[2px]">
            <SidePanel title="Параметры" className="h-[248px] shrink-0">
              <form className="flex flex-col pl-[11px] pt-[11px]">
                <PeriodRadio label="С начала месяца" checked />
                <PeriodRadio label="За прошлый месяц" />
                <PeriodRadio label="За период" />
                <div className="flex flex-col gap-[6px] pl-[7px] pt-[2px]">
                  <MonthSelect id="from" label="с:" />
                  <MonthSelect id="to" label="по:" />
                </div>
                <button type="button" className="ml-[51px] mt-[21px] h-6 w-[75px] rounded-[3px] border border-[#5b8fb8] bg-linear-to-b from-[#fbfeff] via-[#b3d6ee] to-[#dcf4fd]">
                  Применить
                </button>
              </form>
            </SidePanel>
            <SidePanel title="Обозначения" className="min-h-0 flex-1">
              <ul className="flex flex-col gap-[7px] pl-[7px] pt-[9px]">
                {LEGEND.map((item) => (
                  <li key={item.label} className="flex h-[17px] items-center gap-[7px] whitespace-nowrap">
                    <span className={`h-[17px] w-4 border border-[#696969] ${item.color}`} />
                    {item.label}
                  </li>
                ))}
              </ul>
            </SidePanel>
          </aside>
          <div className="ml-[1px] flex min-w-0 flex-1">
            <DataTable />
            <ScrollColumn />
          </div>
        </div>

        <div className="mt-[2px] flex h-[25px] shrink-0 items-center bg-linear-to-b from-[#f2f3f8] to-[#dcdeeb] pl-[6px]">
          <span className="min-w-[222px]">Дом_Октябрьский_60 лет победы1 - ГВС</span>
          <Separator className="mx-2 h-[18px]" />
          <span>ВИС.Т-ТС, #04458</span>
        </div>
      </main>

      <div className="mt-[5px] flex h-[30px] shrink-0 items-center border-t border-[#cfd1e4] bg-linear-to-b from-[#f2f3f8] to-[#dcdeeb] pl-[6px]">
        <button className="flex items-center gap-1">
          Карта наличия данных
          <svg viewBox="0 0 5 3" className="h-[3px] w-[5px]"><path d="M0 0h5L2.500 3z" /></svg>
        </button>
        <div className="ml-auto flex items-center whitespace-nowrap">
          <Separator className="h-5" />
          <svg viewBox="0 0 15 9" className="ml-[9px] mr-1 h-[9px] w-[15px]">
            <path d="M0 3l4-3 8 2 3 3-2 4H4L0 6z" fill="#4b4d4f" />
            <path d="M1 3l4-2 6 2-3 1z" fill="#8e9194" />
            <path d="M11 6h3v2h-3z" fill="#d83c2c" />
            <path d="M6 7h2v1H6z" fill="#59c04b" />
          </svg>
          <span className="w-[318px]">Служб опроса: 4; портов: 16, действует: 16, свободно: 16</span>
          <Separator className="h-5" />
          <div role="progressbar" aria-label="Ход опроса" className="mx-[6px] h-5 w-[91px] rounded-[3px] border border-[#9ea2cc] bg-[#f4f5fa]" />
          <Separator className="h-5" />
          <span className="w-[266px] pl-[7px]">Подключены к 'astku.ru:10000' в 18:13 (03 авг)</span>
        </div>
      </div>

      <Taskbar />
    </div>
  );
}
